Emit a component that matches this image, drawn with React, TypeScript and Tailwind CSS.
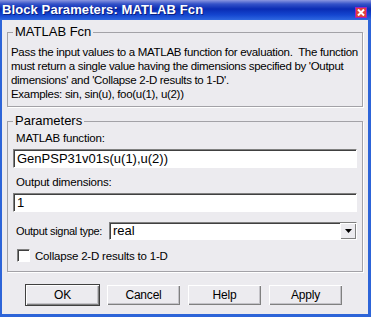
import React from 'react';

const font = { fontFamily: '"Liberation Sans", Arial, sans-serif' };

function GroupBox({ title, className, children }: { title: string; className?: string; children: React.ReactNode }) {
  return (
    <fieldset className={`border border-[#a3a2a7] shadow-[1px_1px_0_#ffffff] mx-[5px] ${className ?? ''}`}>
      <legend className="ml-[5px] px-[2px] text-[13px] leading-[14px] text-black">{title}</legend>
      {children}
    </fieldset>
  );
}

function WinButton({ label, isDefault }: { label: string; isDefault?: boolean }) {
  return (
    <button
      className={`w-[75px] h-[22px] bg-[#ecebef] text-[12px] tracking-[-0.2px] text-black leading-none border ${
        isDefault ? 'border-[#404040]' : 'border-transparent'
      } shadow-[inset_1px_1px_0_#ffffff,inset_-1px_-1px_0_#808080,inset_-2px_-2px_0_#c4c3c8]`}
    >
      {label}
    </button>
  );
}

function TextField({ value }: { value: string }) {
  return (
    <div className="mx-[5px] h-[19px] bg-white border-t border-l border-[#808080] border-b border-r border-b-white border-r-white shadow-[inset_1px_1px_0_#404040] flex items-center px-[3px] text-[13px] text-black">
      {value}
    </div>
  );
}

export default function App() {
  return (
    <div
      style={font}
      className="w-[371px] h-[317px] flex flex-col bg-[#2d64d8] overflow-hidden"
    >
      {/* title bar */}
      <div className="h-[20px] shrink-0 flex items-center justify-between pl-[2px] pr-[4px] bg-[linear-gradient(180deg,#8a96e0_0%,#3452c8_20%,#0a2cb4_45%,#1446d0_75%,#2f68e0_100%)]">
        <span className="text-white font-bold text-[13px] tracking-[0.1px] [text-shadow:1px_1px_0_#0a1f80]">
          Block Parameters: MATLAB Fcn
        </span>
        <div className="w-[12px] h-[11px] mt-[4px] bg-[#e0403a] border border-[#a020c0] flex items-center justify-center">
          <svg width="8" height="7" viewBox="0 0 8 7">
            <path d="M1 0.5 L7 6.5 M7 0.5 L1 6.5" stroke="#fff" strokeWidth="2" />
          </svg>
        </div>
      </div>

      {/* body */}
      <div className="flex-1 ml-[2px] mr-[3px] mb-[3px] bg-[#ecebef] flex flex-col pt-[5px]">
        <GroupBox title="MATLAB Fcn" className="pb-[5px]">
          <p className="px-[3px] pt-[6px] text-[11.5px] tracking-[-0.3px] leading-[14px] text-black">
            Pass the input values to a MATLAB function for evaluation.&nbsp; The function must return a single value
            having the dimensions specified by 'Output dimensions' and 'Collapse 2-D results to 1-D'.
            <br />
            Examples: sin, sin(u), foo(u(1), u(2))
          </p>
        </GroupBox>

        <GroupBox title="Parameters" className="mt-[7px] pb-[9px]">
          <div className="flex flex-col text-[11.5px] tracking-[-0.2px]">
            <div className="ml-[8px] mt-[3px] h-[14px] leading-[14px]">MATLAB function:</div>
            <div className="mt-[4px] tracking-normal">
              <TextField value="GenPSP31v01s(u(1),u(2))" />
            </div>
            <div className="ml-[8px] mt-[7px] h-[14px] leading-[14px]">Output dimensions:</div>
            <div className="mt-[4px] tracking-normal">
              <TextField value="1" />
            </div>
            <div className="mt-[10px] flex items-center pl-[8px] pr-[5px]">
              <span className="leading-[14px] w-[93px] whitespace-nowrap text-[11px] tracking-[-0.3px]">Output signal type:</span>
              <div className="flex-1 h-[18px] bg-white border-t border-l border-[#808080] border-b border-r border-b-white border-r-white shadow-[inset_1px_1px_0_#404040] flex items-center">
                <span className="flex-1 pl-[3px] text-[13px] tracking-normal">real</span>
                <div className="w-[16px] h-[16px] bg-[#ecebef] shadow-[inset_1px_1px_0_#ffffff,inset_-1px_-1px_0_#808080] flex items-center justify-center">
                  <svg width="7" height="4" viewBox="0 0 7 4">
                    <path d="M0 0 H7 L3.5 4 Z" fill="#000" />
                  </svg>
                </div>
              </div>
            </div>
            <div className="mt-[9px] h-[13px] flex items-center pl-[9px]">
              <div className="w-[13px] h-[13px] bg-white border-t border-l border-[#808080] border-b border-r border-b-white border-r-white shadow-[inset_1px_1px_0_#404040]" />
              <span className="ml-[5px] leading-[14px]">Collapse 2-D results to 1-D</span>
            </div>
          </div>
        </GroupBox>

        <div className="mt-[12px] flex justify-center gap-[6px] pr-[2px]">
          <WinButton label="OK" isDefault />
          <WinButton label="Cancel" />
          <WinButton label="Help" />
          <WinButton label="Apply" />
        </div>
      </div>
    </div>
  );
}
